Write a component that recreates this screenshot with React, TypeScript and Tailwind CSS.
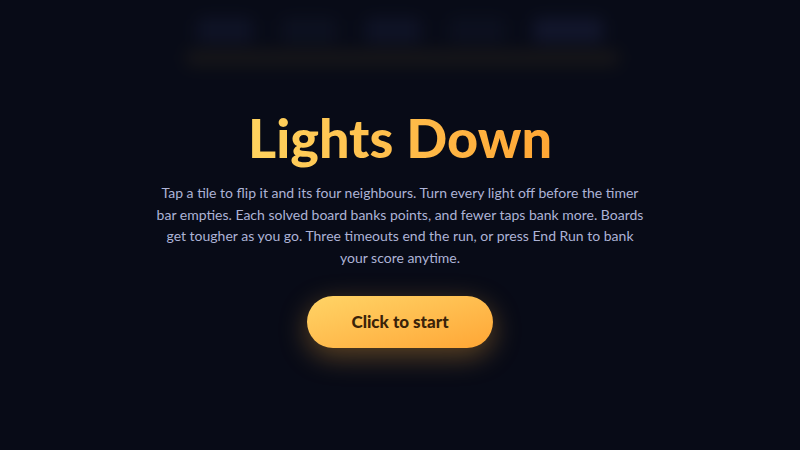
export default function App() {
  return (
    <div
      className="relative h-[450px] w-[800px] overflow-hidden bg-[#070a15]"
      style={{ fontFamily: 'Lato, "Noto Sans", sans-serif' }}
    >
      {/* blurred game board behind the overlay */}
      <div className="absolute inset-0 blur-[8px]">
        <div className="absolute left-1/2 top-[-230px] h-[980px] w-[980px] -translate-x-1/2 rounded-full border border-[#0c1020] bg-[#080b17]" />
        <div className="absolute left-1/2 top-[18px] flex -translate-x-1/2 gap-[28px]">
          <div className="h-[24px] w-[56px] rounded-md bg-[#0f1326]" />
          <div className="h-[24px] w-[56px] rounded-md bg-[#0d1120]" />
          <div className="h-[24px] w-[56px] rounded-md bg-[#0f1326]" />
          <div className="h-[24px] w-[56px] rounded-md bg-[#0c101f]" />
          <div className="h-[24px] w-[70px] rounded-md bg-[#12162c]" />
        </div>
        <div className="absolute left-[185px] top-[50px] h-[16px] w-[435px] rounded-full bg-[#171618]" />
      </div>

      <div className="relative flex h-full flex-col items-center justify-center px-6 pt-[6px] text-center">
        <h1 className="bg-gradient-to-r from-[#ffd35e] to-[#ffa634] bg-clip-text text-[54px] font-black leading-[60px] text-transparent">
          Lights Down
        </h1>
        <p className="mt-[14px] max-w-[490px] text-[14px] leading-[21.5px] text-[#adb3d6]">
          Tap a tile to flip it and its four neighbours. Turn every light off before the timer bar
          empties. Each solved board banks points, and fewer taps bank more. Boards get tougher as
          you go. Three timeouts end the run, or press End Run to bank your score anytime.
        </p>
        <button className="mt-[28px] h-[52px] w-[186px] rounded-full bg-gradient-to-br from-[#ffd466] to-[#ffa634] text-[17px] font-black text-[#3a2309] shadow-[0_8px_28px_rgba(255,176,60,0.35)]">
          Click to start
        </button>
      </div>
    </div>
  );
}
